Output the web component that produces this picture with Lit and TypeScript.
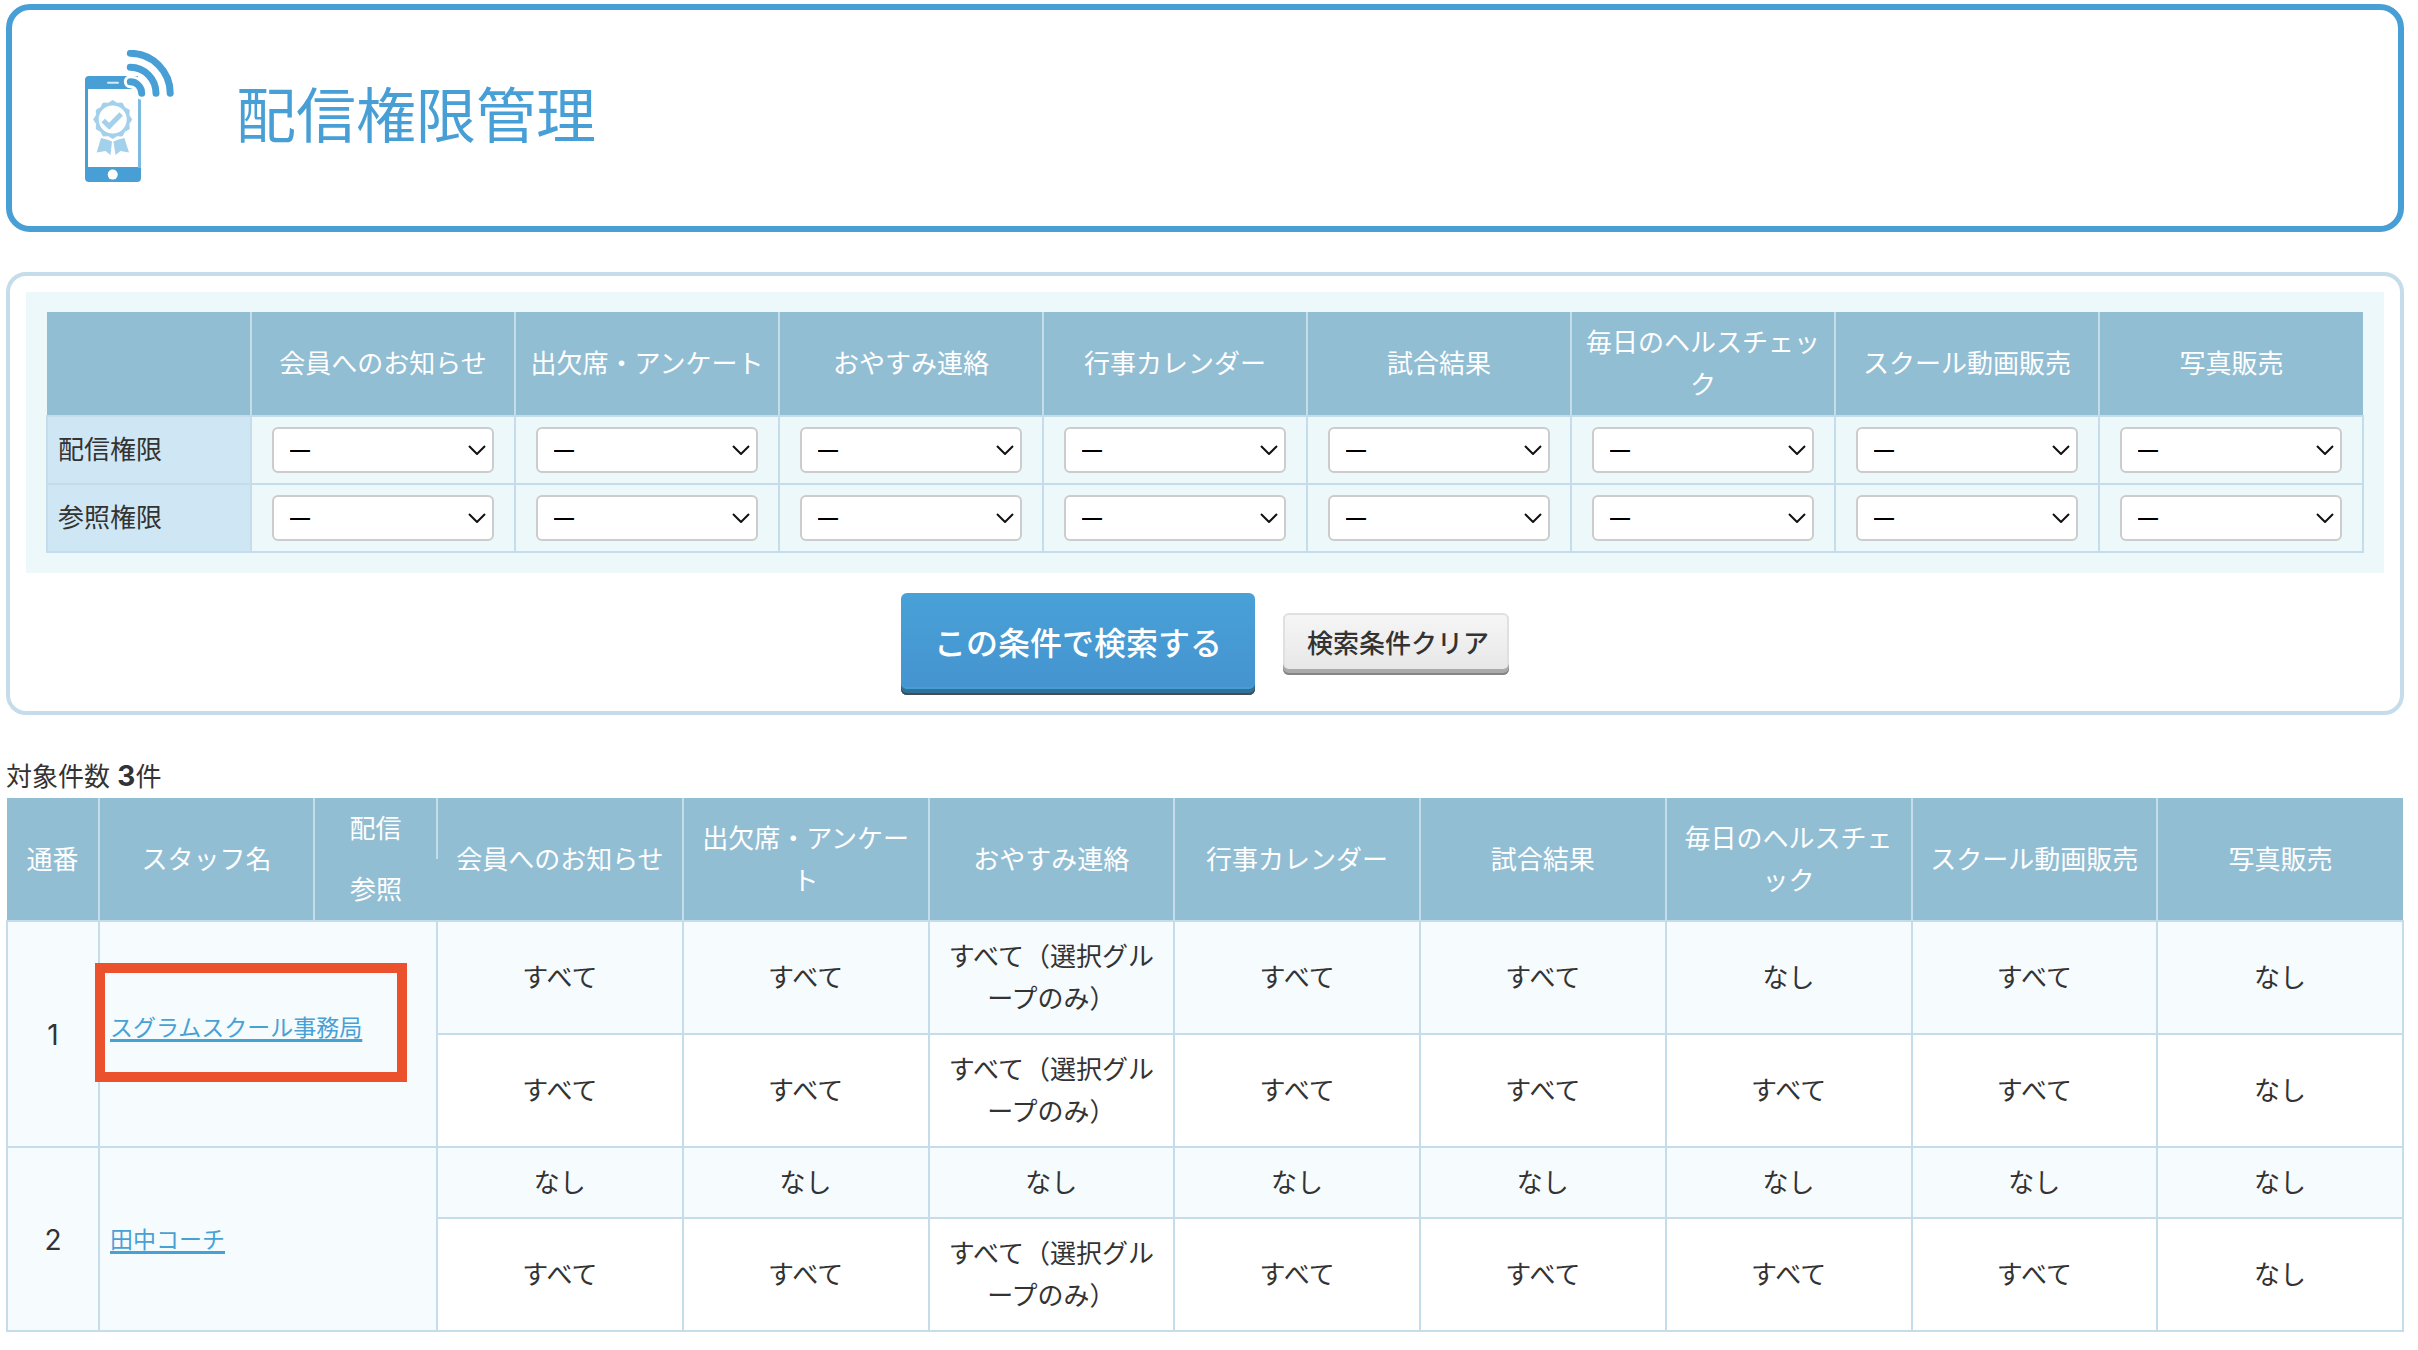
import { LitElement, html, css, svg } from "lit";
import { customElement, property } from "lit/decorators.js";

const FEATURES = [
  "会員へのお知らせ",
  "出欠席・アンケート",
  "おやすみ連絡",
  "行事カレンダー",
  "試合結果",
  "毎日のヘルスチェック",
  "スクール動画販売",
  "写真販売",
];

const ALL = "すべて";
const NONE = "なし";
const GROUP = "すべて（選択グループのみ）";

interface Staff {
  no: number;
  name: string;
  marked: boolean;
  send: string[];
  view: string[];
}

const STAFF: Staff[] = [
  {
    no: 1,
    name: "スグラムスクール事務局",
    marked: true,
    send: [ALL, ALL, GROUP, ALL, ALL, NONE, ALL, NONE],
    view: [ALL, ALL, GROUP, ALL, ALL, ALL, ALL, NONE],
  },
  {
    no: 2,
    name: "田中コーチ",
    marked: false,
    send: [NONE, NONE, NONE, NONE, NONE, NONE, NONE, NONE],
    view: [ALL, ALL, GROUP, ALL, ALL, ALL, ALL, NONE],
  },
];

// Scalloped outline of the award badge.
const badgeOutline = (cx: number, cy: number, outer: number, inner: number, teeth: number) => {
  const points: string[] = [];
  for (let i = 0; i < teeth * 2; i++) {
    const r = i % 2 ? inner : outer;
    const a = (Math.PI * i) / teeth - Math.PI / 2;
    points.push(`${(cx + r * Math.cos(a)).toFixed(2)},${(cy + r * Math.sin(a)).toFixed(2)}`);
  }
  return points.join(" ");
};

@customElement("phone-icon")
export class PhoneIcon extends LitElement {
  static styles = css`
    :host {
      display: block;
    }
    .icon {
      display: block;
      width: 90px;
      height: 132px;
    }
  `;

  render() {
    return html`<svg class="icon" viewBox="0 0 90 132" aria-hidden="true">
      ${svg`
        <path fill="#489fd5" d="M5 26H54V39H4V117H57V128a4 4 0 0 1-4 4H5a4 4 0 0 1-4-4V30a4 4 0 0 1 4-4Z"/>
        <path fill="#489fd5" d="M1 38H4V118H1Z"/>
        <path fill="#7dbbe1" d="M54 48H57V118H54Z"/>
        <path d="M24 32.7H34" stroke="#d5eaf6" stroke-width="2" stroke-linecap="round"/>
        <circle cx="28.7" cy="124.6" r="5" fill="#fff"/>
        <path d="M46.3 31.7A11.6 12 0 0 1 57.7 43.3" fill="none" stroke="#fff" stroke-width="13" stroke-linecap="round"/>
        <g fill="none" stroke="#489fd5" stroke-width="7" stroke-linecap="round">
          <path d="M46.3 31.8A11.4 11.6 0 0 1 57.7 43.2"/>
          <path d="M46.3 17.2A26 26 0 0 1 72 43.2"/>
          <path d="M46.3 3.3A40 40 0 0 1 86.2 43.2"/>
        </g>
        <polygon points=${badgeOutline(28.7, 69.5, 19, 16.8, 12)} fill="#a3d0ea" stroke="#a3d0ea" stroke-linejoin="round"/>
        <circle cx="28.7" cy="69.5" r="14" fill="#fff"/>
        <path d="M19.2 70.5L25.2 76.2L37.2 64" fill="none" stroke="#a3d0ea" stroke-width="5"/>
        <path fill="#a3d0ea" d="M17 88L23 89.500L28 91.500L26.500 105L21.500 101L12.700 102.500ZM40.400 88L34.400 89.500L29.400 91.500L31.500 105L36.500 101L45 102.500Z"/>
      `}
    </svg>`;
  }
}

@customElement("permission-select")
export class PermissionSelect extends LitElement {
  @property() label = "";

  static styles = css`
    :host {
      display: grid;
      align-items: center;
    }
    .box {
      grid-area: 1 / 1;
      appearance: none;
      box-sizing: border-box;
      width: 100%;
      height: 46px;
      margin: 0;
      padding: 0 40px 0 16px;
      border: 2px solid #ccc;
      border-radius: 6px;
      background: #fff;
      color: #000;
      font-family: Inter, "Noto Sans CJK JP", sans-serif;
      font-size: 20px;
      font-weight: 600;
    }
    .arrow {
      grid-area: 1 / 1;
      justify-self: end;
      width: 18px;
      height: 10px;
      margin-right: 8px;
      pointer-events: none;
    }
  `;

  render() {
    return html`
      <select class="box" aria-label=${this.label}>
        <option value="">―</option>
        <option>${ALL}</option>
        <option>${NONE}</option>
      </select>
      <svg class="arrow" viewBox="0 0 18 10" aria-hidden="true">
        <path d="M1 1L9 9L17 1" fill="none" stroke="#111" stroke-width="2" />
      </svg>
    `;
  }
}

@customElement("app-root")
export class AppRoot extends LitElement {
  static styles = css`
    :host {
      display: block;
      padding: 4px 14px 16px 6px;
      background: #fff;
      color: #333;
      font-family: Inter, "Noto Sans CJK JP", sans-serif;
      font-size: 26px;
      line-height: 42px;
    }
    .banner {
      display: flex;
      align-items: center;
      gap: 62px;
      box-sizing: border-box;
      min-height: 228px;
      padding: 0 72px 4px;
      border: 6px solid #489fd5;
      border-radius: 24px;
    }
    .title {
      margin: 0;
      color: #489fd5;
      font-size: 60px;
      line-height: 80px;
      font-weight: 400;
    }
    .search {
      margin-top: 40px;
      padding: 16px;
      border: 4px solid #c5ddea;
      border-radius: 20px;
    }
    .criteria {
      padding: 20px;
      background: #ecf8fa;
    }
    .grid {
      width: 100%;
      border-collapse: collapse;
      table-layout: fixed;
    }
    .head {
      padding: 10px 10px 9px;
      border-right: 2px solid #c5ddea;
      background: #92bed4;
      color: #fff;
      font-weight: 400;
      text-align: center;
      word-break: break-all;
      line-break: anywhere;
    }
    .head:last-child,
    .head.open {
      border-right: 0;
    }
    .head.upper {
      border-right: 2px solid #c5ddea;
    }
    .side {
      padding: 10px;
      border: 2px solid #c5ddea;
      background: #cfe7f4;
      font-weight: 400;
      text-align: left;
    }
    .corner {
      width: 183px;
    }
    .field {
      padding: 10px 20px;
      border: 2px solid #c5ddea;
    }
    .actions {
      display: flex;
      justify-content: center;
      align-items: center;
      gap: 28px;
      margin-top: 20px;
    }
    .submit,
    .clear {
      box-sizing: border-box;
      margin: 0;
      border: 0;
      font-family: "Noto Sans CJK JP", sans-serif;
      cursor: pointer;
    }
    .submit {
      width: 354px;
      height: 102px;
      padding: 0 0 6px;
      border-radius: 6px;
      background: linear-gradient(#48a1d7, #4593cf);
      box-shadow: inset 0 -2px #464c52, inset 0 -6px #2f7199, inset 0 -8px #449fd5;
      color: #fff;
      font-size: 32px;
      font-weight: 500;
    }
    .clear {
      width: 226px;
      height: 62px;
      padding: 0 0 6px 4px;
      border-radius: 6px;
      background: linear-gradient(#f6f6f6, #e6e6e6);
      box-shadow: inset 0 -2px #858585, inset 0 -6px #aaa, inset 0 0 0 2px #e0e0e0;
      color: #333;
      font-size: 26px;
      font-weight: 500;
    }
    .count {
      margin: 40px 0 0;
    }
    .total {
      font-size: 28px;
    }
    .no-col {
      width: 92px;
    }
    .name-col {
      width: 215px;
    }
    .kind-col {
      width: 123px;
    }
    .cell {
      padding: 14px 10px 13px;
      border: 2px solid #c5ddea;
      text-align: center;
      word-break: break-all;
      line-break: anywhere;
    }
    .number {
      font-size: 28px;
    }
    .tint {
      background: #f6fbfe;
    }
    .name {
      position: relative;
      text-align: left;
    }
    .name.marked {
      padding-bottom: 28px;
    }
    .link {
      color: #48a1d5;
      font-size: 23px;
      text-decoration-thickness: 3px;
      text-underline-offset: 3px;
    }
    .marker {
      position: absolute;
      top: 41px;
      left: -5px;
      box-sizing: border-box;
      width: 312px;
      height: 119px;
      border: 10px solid #eb512d;
      pointer-events: none;
    }
  `;

  private filterRow(title: string) {
    return html`<tr>
      <th class="side" scope="row">${title}</th>
      ${FEATURES.map(
        (f) => html`<td class="field">
          <permission-select .label=${`${title} ${f}`}></permission-select>
        </td>`
      )}
    </tr>`;
  }

  private staffRows(s: Staff) {
    return html`
      <tr>
        <td class="cell tint number" rowspan="2">${s.no}</td>
        <td class="cell tint name ${s.marked ? "marked" : ""}" colspan="2" rowspan="2">
          <a class="link" href="#staff-${s.no}">${s.name}</a>
          ${s.marked ? html`<span class="marker"></span>` : ""}
        </td>
        ${s.send.map((v) => html`<td class="cell tint">${v}</td>`)}
      </tr>
      <tr>
        ${s.view.map((v) => html`<td class="cell">${v}</td>`)}
      </tr>
    `;
  }

  render() {
    return html`
      <header class="banner">
        <phone-icon></phone-icon>
        <h1 class="title">配信権限管理</h1>
      </header>

      <form class="search" @submit=${(e: Event) => e.preventDefault()}>
        <div class="criteria">
          <table class="grid">
            <thead>
              <tr>
                <td class="head corner"></td>
                ${FEATURES.map((f) => html`<th class="head" scope="col">${f}</th>`)}
              </tr>
            </thead>
            <tbody>
              ${this.filterRow("配信権限")} ${this.filterRow("参照権限")}
            </tbody>
          </table>
        </div>
        <div class="actions">
          <button class="submit" type="submit">この条件で検索する</button>
          <button class="clear" type="reset">検索条件クリア</button>
        </div>
      </form>

      <p class="count">対象件数 <strong class="total">3</strong>件</p>
      <table class="grid">
        <colgroup>
          <col class="no-col" />
          <col class="name-col" />
          <col class="kind-col" />
          ${FEATURES.map(() => html`<col />`)}
        </colgroup>
        <thead>
          <tr>
            <th class="head" scope="col" rowspan="2">通番</th>
            <th class="head" scope="col" rowspan="2">スタッフ名</th>
            <th class="head upper" scope="col">配信</th>
            ${FEATURES.map((f) => html`<th class="head" scope="col" rowspan="2">${f}</th>`)}
          </tr>
          <tr>
            <th class="head open" scope="col">参照</th>
          </tr>
        </thead>
        <tbody>
          ${STAFF.map((s) => this.staffRows(s))}
        </tbody>
      </table>
    `;
  }
}
